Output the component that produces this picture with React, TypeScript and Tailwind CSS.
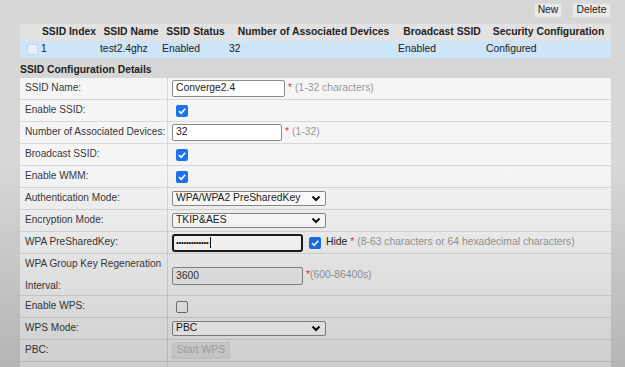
import React from "react";

const Check = ({ checked }: { checked: boolean }) =>
  checked ? (
    <div className="w-[12px] h-[12px] rounded-[2px] bg-[#1a73e8] flex items-center justify-center">
      <svg width="10" height="10" viewBox="0 0 10 10">
        <polyline points="2,5.2 4.2,7.3 8.2,2.8" fill="none" stroke="white" strokeWidth="1.7" />
      </svg>
    </div>
  ) : (
    <div className="w-[12px] h-[12px] rounded-[2px] border border-[#777] bg-[#f4f4f4]" />
  );

const Chevron = () => (
  <svg width="10" height="7" viewBox="0 0 10 7">
    <polyline points="1.5,1.5 5,5 8.5,1.5" fill="none" stroke="#111" strokeWidth="2" />
  </svg>
);

const Select = ({ value }: { value: string }) => (
  <div className="w-[154px] h-[15px] ml-[3px] border border-[#8a8a8a] rounded-[2px] bg-white flex items-center justify-between pl-[3px] pr-[4px] text-[#222]">
    <span>{value}</span>
    <Chevron />
  </div>
);

const Row = ({
  label,
  children,
  h = "h-[22px]",
}: {
  label: React.ReactNode;
  children?: React.ReactNode;
  h?: string;
}) => (
  <div className={`grid grid-cols-[148px_1fr] border-b border-[#d8d8d8] bg-[#f5f5f5] ${h}`}>
    <div className="flex items-center pl-[5px] border-r border-[#d8d8d8] whitespace-nowrap text-[10.1px]">{label}</div>
    <div className="flex items-center pl-[1px] whitespace-nowrap">{children}</div>
  </div>
);

export default function App() {
  return (
    <div className="relative w-[625px] h-[367px] overflow-hidden bg-[#d7d7d7] font-['Liberation_Sans',Arial,sans-serif] text-[10.35px] text-[#383838] leading-none">
      <div className="pl-[20px] pr-[14px]">
        {/* top buttons */}
        <div className="flex justify-end gap-[10px] pt-[3px] h-[24px]">
          <div className="w-[28px] h-[15px] bg-[#e9e9e9] border border-[#dcdcdc] flex items-center justify-center text-[#222]">
            New
          </div>
          <div className="w-[39px] h-[15px] bg-[#e9e9e9] border border-[#dcdcdc] flex items-center justify-center text-[#222]">
            Delete
          </div>
        </div>

        {/* table header */}
        <div className="grid grid-cols-[18px_62px_62px_67px_169px_88px_1fr] h-[17px] bg-[#e2e2e2] font-bold text-[#222] items-center text-center whitespace-nowrap">
          <div />
          <div>SSID Index</div>
          <div>SSID Name</div>
          <div>SSID Status</div>
          <div>Number of Associated Devices</div>
          <div>Broadcast SSID</div>
          <div>Security Configuration</div>
        </div>
        {/* data row */}
        <div className="grid grid-cols-[18px_62px_62px_67px_169px_88px_1fr] h-[17px] bg-[#cde5f8] items-center text-[#222]">
          <div className="flex justify-end">
            <div className="w-[11px] h-[11px] rounded-[2px] bg-[#e6f1fa] border border-[#c4d8ea]" />
          </div>
          <div className="pl-[3px]">1</div>
          <div>test2.4ghz</div>
          <div>Enabled</div>
          <div>32</div>
          <div>Enabled</div>
          <div>Configured</div>
        </div>

        <div className="h-[20px] flex items-center pt-[4px] font-bold text-[#222]">SSID Configuration Details</div>

        {/* form */}
        <div>
          <Row label="SSID Name:">
            <div className="w-[113px] h-[17px] ml-[3px] border border-[#8a8a8a] rounded-[2px] bg-white flex items-center pl-[3px] text-[#222]">
              Converge2.4
            </div>
            <span className="ml-[3px] text-[#e04040]">*</span>
            <span className="ml-[3px] text-[#999]">(1-32 characters)</span>
          </Row>
          <Row label="Enable SSID:">
            <div className="ml-[7px]">
              <Check checked />
            </div>
          </Row>
          <Row label="Number of Associated Devices:">
            <div className="w-[110px] h-[17px] ml-[3px] border border-[#8a8a8a] rounded-[2px] bg-white flex items-center pl-[3px] text-[#222]">
              32
            </div>
            <span className="ml-[3px] text-[#e04040]">*</span>
            <span className="ml-[3px] text-[#999]">(1-32)</span>
          </Row>
          <Row label="Broadcast SSID:">
            <div className="ml-[7px]">
              <Check checked />
            </div>
          </Row>
          <Row label="Enable WMM:">
            <div className="ml-[7px]">
              <Check checked />
            </div>
          </Row>
          <Row label="Authentication Mode:">
            <Select value="WPA/WPA2 PreSharedKey" />
          </Row>
          <Row label="Encryption Mode:">
            <Select value="TKIP&AES" />
          </Row>
          <Row label="WPA PreSharedKey:">
            <div className="w-[131px] h-[18px] ml-[3px] border-2 border-[#1c1c1c] rounded-[3px] bg-white flex items-center pl-[2px] text-[#111]">
              <span className="text-[8px] tracking-[-0.3px]">•••••••••••••</span>
              <span className="w-[1px] h-[11px] bg-[#111] ml-[1px]" />
            </div>
            <div className="ml-[6px]">
              <Check checked />
            </div>
            <span className="ml-[5px] text-[#222]">Hide</span>
            <span className="ml-[3px] text-[#e04040]">*</span>
            <span className="ml-[3px] text-[#999]">(8-63 characters or 64 hexadecimal characters)</span>
          </Row>
          <Row
            h="h-[42px]"
            label={
              <div className="leading-[22px] -mt-[1px]">
                WPA Group Key Regeneration
                <br />
                Interval:
              </div>
            }
          >
            <div className="w-[131px] h-[18px] ml-[3px] mt-[1px] border border-[#8a8a8a] rounded-[2px] bg-[#efefef] flex items-center pl-[3px] text-[#333]">
              3600
            </div>
            <span className="ml-[3px] text-[#e04040]">*</span>
            <span className="text-[#999]">(600-86400s)</span>
          </Row>
          <Row label="Enable WPS:">
            <div className="ml-[7px]">
              <Check checked={false} />
            </div>
          </Row>
          <Row label="WPS Mode:">
            <Select value="PBC" />
          </Row>
          <Row label="PBC:">
            <div className="w-[58px] h-[17px] ml-[3px] border border-[#dcdcdc] rounded-[2px] bg-[#e6e6e6] flex items-center justify-center text-[#b5b5b5]">
              Start WPS
            </div>
          </Row>
          <Row label="" />
        </div>
      </div>

      {/* video vignette */}
      <div className="pointer-events-none absolute inset-0 bg-[linear-gradient(to_bottom,rgba(0,0,0,0)_0%,rgba(0,0,0,0)_45%,rgba(0,0,0,0.16)_100%)]" />
    </div>
  );
}
